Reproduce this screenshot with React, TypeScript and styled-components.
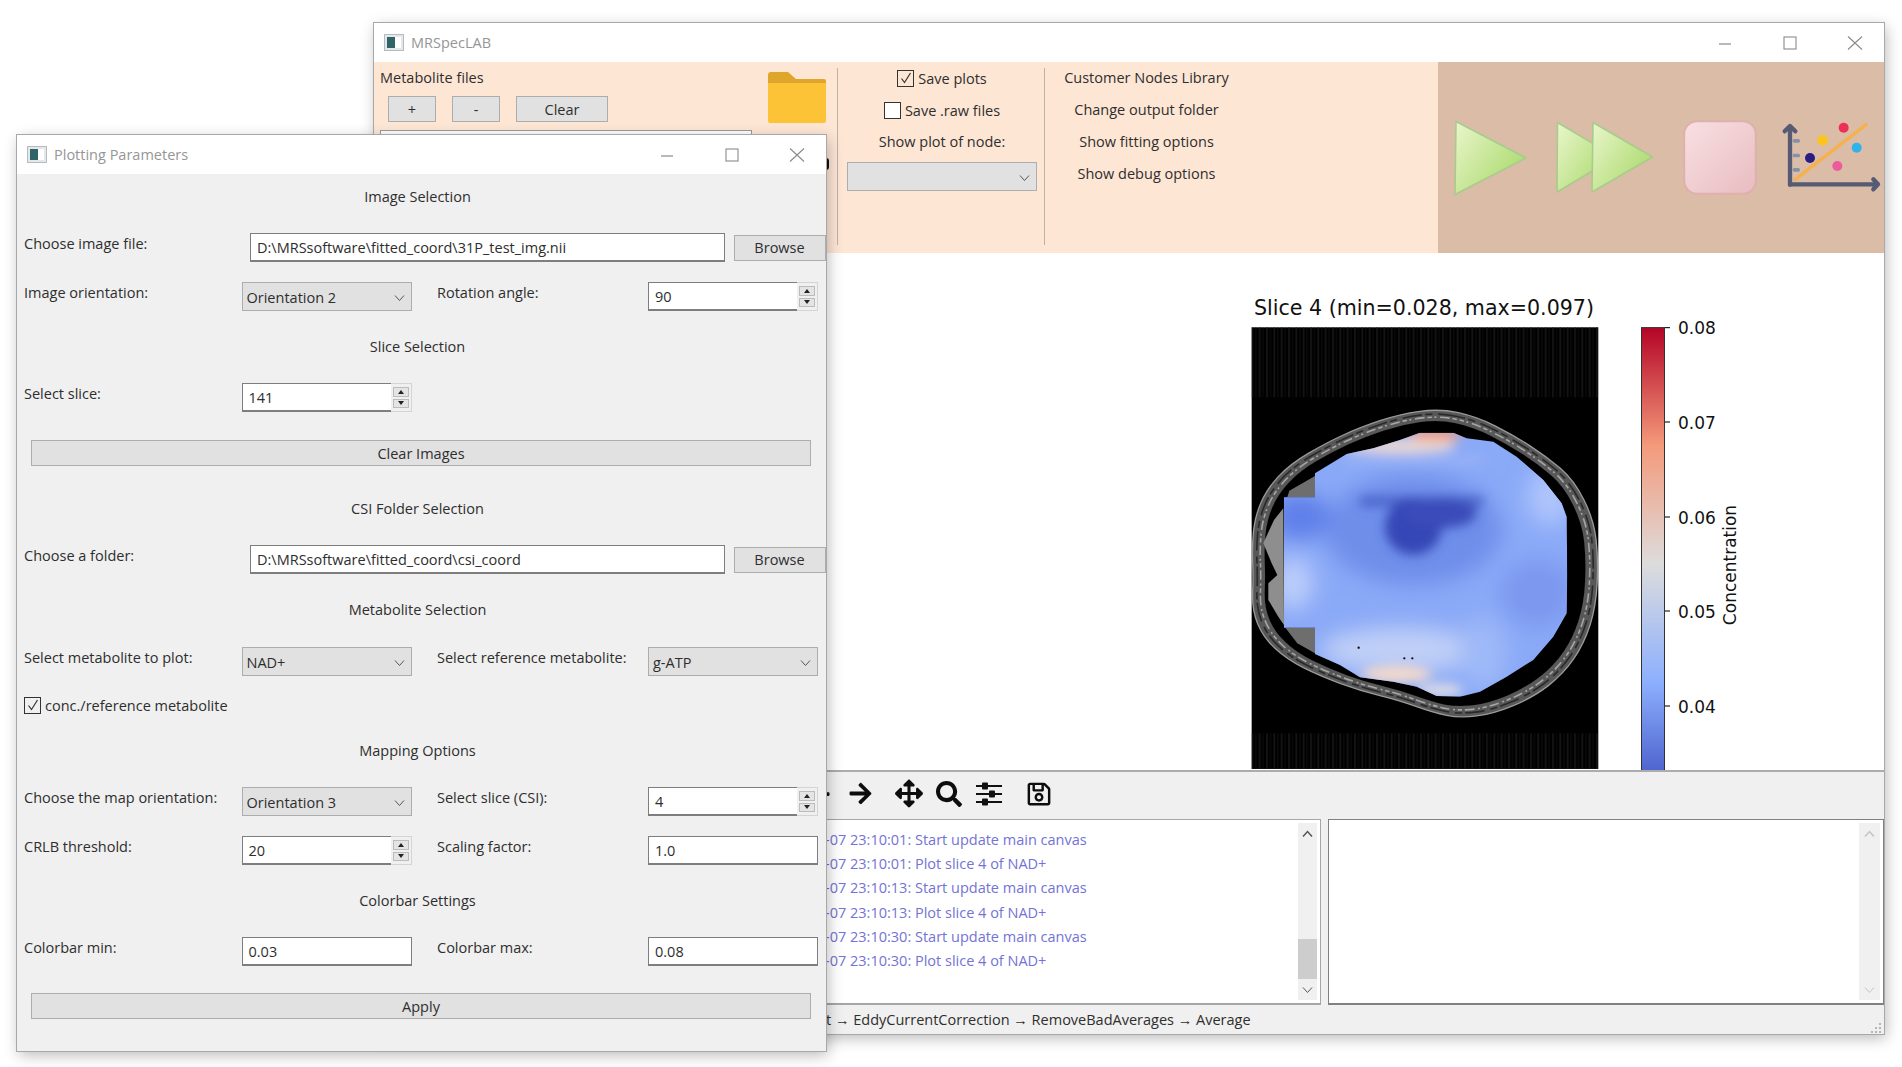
import React from "react";
import styled, { createGlobalStyle } from "styled-components";
import { FaArrowLeft, FaArrowRight, FaArrowsAlt, FaSearch, FaRegSave } from "react-icons/fa";

const GlobalStyle = createGlobalStyle`
  html, body { margin: 0; padding: 0; background: #fff; }
  body { width: 1902px; height: 1067px; overflow: hidden; font-family: "Open Sans", "Liberation Sans", sans-serif; }
  * { box-sizing: border-box; }
`;

const Desktop = styled.div`
  position: relative;
  width: 1902px;
  height: 1067px;
  overflow: hidden;
  background: #fff;
  font-size: 14.5px;
  color: #2e2e2e;
`;

const Window = styled.div<{ $x: number; $y: number; $w: number; $h: number }>`
  position: absolute;
  left: ${(p) => p.$x}px;
  top: ${(p) => p.$y}px;
  width: ${(p) => p.$w}px;
  height: ${(p) => p.$h}px;
  display: flex;
  flex-direction: column;
  background: #f0f0f0;
  box-shadow: 0 0 0 1px #a8a8a8, 2px 4px 14px rgba(0, 0, 0, 0.28);
`;

const TitleBar = styled.div`
  flex: none;
  height: 39px;
  display: flex;
  align-items: center;
  background: #fff;
  color: #969696;
  padding-left: 10px;
  gap: 7px;
`;

const TitleText = styled.span`
  flex: 1;
`;

const WinButton = styled.div`
  width: 58px;
  height: 39px;
  display: flex;
  align-items: center;
  justify-content: center;
`;

/* ---------- small drawings ---------- */

const AppIcon = () => (
  <svg width="20" height="17" viewBox="0 0 20 17">
    <rect x="0.5" y="0.5" width="19" height="16" fill="#e4e8ea" stroke="#b4bcc0" />
    <rect x="3" y="3" width="14" height="11" fill="#fff" />
    <rect x="3" y="3" width="8" height="11" fill="#2f6468" />
  </svg>
);

const MinIcon = () => (
  <svg width="14" height="14" viewBox="0 0 14 14">
    <line x1="1" y1="8" x2="13" y2="8" stroke="#8a8a8a" strokeWidth="1.2" />
  </svg>
);

const MaxIcon = () => (
  <svg width="14" height="14" viewBox="0 0 14 14">
    <rect x="1" y="1" width="12" height="12" fill="none" stroke="#8a8a8a" strokeWidth="1.1" />
  </svg>
);

const CloseIcon = () => (
  <svg width="16" height="14" viewBox="0 0 16 14">
    <path d="M1 0.5 L15 13.5 M15 0.5 L1 13.5" stroke="#8a8a8a" strokeWidth="1.1" />
  </svg>
);

const Chevron = ({ color = "#555" }: { color?: string }) => (
  <svg width="11" height="8" viewBox="0 0 11 8">
    <path d="M1 1.5 L5.5 6.5 L10 1.5" fill="none" stroke={color} strokeWidth="1" />
  </svg>
);

const ChevronUp = ({ color = "#555" }: { color?: string }) => (
  <svg width="11" height="8" viewBox="0 0 11 8">
    <path d="M1 6.5 L5.5 1.5 L10 6.5" fill="none" stroke={color} strokeWidth="1.5" />
  </svg>
);

const TickMark = () => (
  <svg width="12" height="12" viewBox="0 0 12 12">
    <path d="M1.5 6.5 L4.5 10.5 L10.5 1" fill="none" stroke="#333" strokeWidth="1.2" />
  </svg>
);

const FolderIcon = () => (
  <svg width="58" height="51" viewBox="0 0 58 51">
    <path d="M0 3 Q0 0 3 0 H20 L28 7 H56 Q58 7 58 9 V20 H0 Z" fill="#dfa62c" />
    <path d="M0 11 H58 V49 Q58 51 56 51 H2 Q0 51 0 49 Z" fill="#fcc336" />
  </svg>
);

const PlayIcon = () => (
  <svg width="74" height="76" viewBox="0 0 74 76">
    <defs>
      <linearGradient id="playFill" x1="0" y1="0" x2="1" y2="0.75">
        <stop offset="0" stopColor="#eaf6cc" />
        <stop offset="1" stopColor="#a9d96a" />
      </linearGradient>
    </defs>
    <path d="M2 1.5 L72 38 L1 74.5 Z" fill="url(#playFill)" stroke="#a9cb8c" strokeWidth="1.6" strokeLinejoin="round" />
  </svg>
);

const DoublePlayIcon = () => (
  <svg width="98" height="73" viewBox="0 0 98 73">
    <defs>
      <linearGradient id="playFill2" x1="0" y1="0" x2="1" y2="0.75">
        <stop offset="0" stopColor="#eaf6cc" />
        <stop offset="1" stopColor="#a9d96a" />
      </linearGradient>
    </defs>
    <path d="M1.5 1.5 L60 36 L1 71 Z" fill="url(#playFill2)" stroke="#a9cb8c" strokeWidth="1.6" strokeLinejoin="round" />
    <path d="M37 1.5 L96.5 36 L36 71 Z" fill="url(#playFill2)" stroke="#a9cb8c" strokeWidth="1.6" strokeLinejoin="round" />
  </svg>
);

const StopIcon = () => (
  <svg width="74" height="75" viewBox="0 0 74 75">
    <defs>
      <linearGradient id="stopFill" x1="0" y1="0" x2="1" y2="1">
        <stop offset="0" stopColor="#f8e0e3" />
        <stop offset="1" stopColor="#e8bcc0" />
      </linearGradient>
    </defs>
    <rect x="1.2" y="1.2" width="71.6" height="72.6" rx="13" fill="url(#stopFill)" stroke="#dfb0ae" strokeWidth="2" />
  </svg>
);

const ChartIcon = () => (
  <svg width="102" height="72" viewBox="1040 130 306 216">
    <line x1="1082" y1="305" x2="1302" y2="135" stroke="#f5b14e" strokeWidth="10" />
    <g fill="#8491a6">
      <rect x="1078" y="181" width="22" height="11" rx="5" />
      <rect x="1078" y="225" width="22" height="11" rx="5" />
      <rect x="1078" y="268" width="22" height="11" rx="5" />
    </g>
    <g fill="none" stroke="#565a72" strokeWidth="13" strokeLinecap="round" strokeLinejoin="round">
      <path d="M1070 318 V145 M1054 158 L1070 142 L1086 158" />
      <path d="M1070 317 H1330 M1320 302 L1334 317 L1320 332" />
    </g>
    <circle cx="1231" cy="147" r="15" fill="#ee3059" />
    <circle cx="1168" cy="185" r="16" fill="#fcc41c" />
    <circle cx="1270" cy="207" r="15" fill="#2fb3e8" />
    <circle cx="1130" cy="238" r="15" fill="#2a1c82" />
    <circle cx="1212" cy="262" r="15" fill="#ee5b9c" />
  </svg>
);

const SlidersIcon = () => (
  <svg width="26" height="24" viewBox="0 0 26 24">
    <g stroke="#111" strokeWidth="2">
      <line x1="0" y1="4" x2="26" y2="4" />
      <line x1="0" y1="12" x2="26" y2="12" />
      <line x1="0" y1="20" x2="26" y2="20" />
    </g>
    <g fill="#111">
      <rect x="6" y="0.5" width="6" height="7" rx="1" />
      <rect x="13" y="8.5" width="6" height="7" rx="1" />
      <rect x="6" y="16.5" width="6" height="7" rx="1" />
    </g>
  </svg>
);

const SizeGrip = () => (
  <svg width="12" height="12" viewBox="0 0 12 12" fill="#b4b4b4">
    <rect x="9" y="1" width="2" height="2" />
    <rect x="5" y="5" width="2" height="2" />
    <rect x="9" y="5" width="2" height="2" />
    <rect x="1" y="9" width="2" height="2" />
    <rect x="5" y="9" width="2" height="2" />
    <rect x="9" y="9" width="2" height="2" />
  </svg>
);

/* ---------- main window ---------- */

const Ribbon = styled.div`
  flex: none;
  height: 191px;
  display: flex;
`;

const PeachPanel = styled.div`
  width: 1064px;
  display: flex;
  padding-left: 6px;
  background: #fee6d5;
`;

const TanPanel = styled.div`
  flex: 1;
  display: flex;
  align-items: center;
  padding-left: 16px;
  background: #dabca7;
`;

const TanSlot = styled.div<{ $ml: number }>`
  margin-left: ${(p) => p.$ml}px;
  display: flex;
`;

const FileColumn = styled.div`
  width: 372px;
  padding-top: 4px;
  display: flex;
  flex-direction: column;
`;

const RibbonText = styled.div`
  height: 24px;
  line-height: 24px;
  white-space: nowrap;
`;

const FileButtons = styled.div`
  margin-top: 6px;
  padding-left: 8px;
  display: flex;
  gap: 16px;
`;

const FileList = styled.div`
  margin-top: 8px;
  height: 100px;
  background: #fff;
  border: 1px solid #9a9a9a;
`;

const FolderColumn = styled.div`
  width: 58px;
  margin-left: 16px;
  padding-top: 10px;
  display: flex;
  flex-direction: column;
  align-items: flex-end;
`;

const EdgeMark = styled.div`
  width: 6px;
  height: 12px;
  margin-top: 35px;
  margin-right: -3px;
  background: #111;
  border-radius: 3px;
`;

const RibbonRule = styled.div<{ $ml: number }>`
  flex: none;
  width: 1px;
  height: 177px;
  margin: 6px 0 0 ${(p) => p.$ml}px;
  background: #bdb2aa;
`;

const SaveColumn = styled.div`
  width: 190px;
  margin-left: 9px;
  padding-top: 4px;
  display: flex;
  flex-direction: column;
  align-items: center;
  gap: 8px;
`;

const NodesColumn = styled.div`
  width: 187px;
  margin-left: 8px;
  padding-top: 4px;
  display: flex;
  flex-direction: column;
  align-items: center;
  gap: 8px;
`;

const CheckRow = styled.div`
  height: 24px;
  display: flex;
  align-items: center;
  gap: 4px;
  white-space: nowrap;
`;

const CheckBox = styled.div<{ $on?: boolean }>`
  width: 17px;
  height: 17px;
  display: flex;
  align-items: center;
  justify-content: center;
  background: ${(p) => (p.$on ? "transparent" : "#fff")};
  border: 1px solid #333;
`;

const Canvas = styled.div`
  flex: none;
  height: 517px;
  background: #fff;
  overflow: hidden;
`;

const NavBar = styled.div`
  flex: none;
  height: 49px;
  display: flex;
  align-items: center;
  padding: 0 0 4px 432px;
  background: #f0f0f0;
  border-top: 2px solid #acacac;
  color: #0d0d0d;
`;

const NavSlot = styled.div<{ $ml: number; $w: number }>`
  width: ${(p) => p.$w}px;
  margin-left: ${(p) => p.$ml}px;
  display: flex;
  justify-content: center;
  svg { display: block; }
`;

const LogArea = styled.div`
  flex: none;
  height: 186px;
  display: flex;
  gap: 7px;
`;

const LogBox = styled.div<{ $dark?: boolean; $w?: number }>`
  width: ${(p) => (p.$w ? `${p.$w}px` : "auto")};
  flex: ${(p) => (p.$w ? "none" : 1)};
  display: flex;
  background: #fff;
  border: 1px solid ${(p) => (p.$dark ? "#808080" : "#a6a6a6")};
  border-bottom-width: 2px;
`;

const LogLines = styled.div`
  flex: 1;
  padding: 8px 0 0 450px;
  color: #7373d6;
`;

const LogLine = styled.div`
  height: 24.2px;
  line-height: 24.2px;
  white-space: nowrap;
`;

const ScrollTrack = styled.div<{ $w: number }>`
  position: relative;
  width: ${(p) => p.$w}px;
  margin: 3px 3px 3px 0;
  display: flex;
  flex-direction: column;
  align-items: center;
  justify-content: space-between;
  padding: 7px 0 6px;
  background: #f0f0f0;
`;

const ScrollThumb = styled.div`
  position: absolute;
  left: 0;
  right: 0;
  top: 116px;
  height: 40px;
  background: #cdcdcd;
`;

const StatusBar = styled.div`
  flex: 1;
  display: flex;
  align-items: center;
  justify-content: space-between;
  padding: 0 2px 0 452px;
  white-space: nowrap;
`;

const GripSlot = styled.div`
  align-self: flex-end;
  display: flex;
`;

/* ---------- plotting window ---------- */

const Form = styled.div`
  flex: 1;
  display: flex;
  flex-direction: column;
  padding-left: 7px;
`;

const SectionTitle = styled.div<{ $mt: number }>`
  height: 24px;
  line-height: 24px;
  margin-top: ${(p) => p.$mt}px;
  padding-right: 15px;
  text-align: center;
`;

const PathRow = styled.div<{ $mt: number }>`
  margin-top: ${(p) => p.$mt}px;
  display: grid;
  grid-template-columns: 217.5px 475px 92px;
  column-gap: 8.5px;
  align-items: center;
`;

const PairRow = styled.div<{ $mt: number }>`
  margin-top: ${(p) => p.$mt}px;
  display: grid;
  grid-template-columns: 217.5px 170px 236.5px 170px;
  align-items: center;
`;

const Label = styled.div`
  padding-bottom: 8px;
  white-space: nowrap;
`;

const SecondLabel = styled(Label)`
  padding-left: 25.5px;
`;

const Field = styled.div`
  height: 29px;
  line-height: 27px;
  padding-left: 6px;
  background: #fff;
  border: 1px solid #7e7e7e;
  border-bottom-width: 2px;
  white-space: nowrap;
`;

const SpinWrap = styled.div`
  display: flex;
  height: 29px;
`;

const SpinField = styled(Field)`
  flex: 1;
  border-right: 0;
`;

const SpinArrows = styled.div`
  width: 21px;
  padding: 3px 2px;
  display: flex;
  flex-direction: column;
  gap: 2px;
  background: #f0f0f0;
  border: 1px solid #d4d4d4;
  border-left: 0;
`;

const SpinArrow = styled.div<{ $down?: boolean }>`
  flex: 1;
  position: relative;
  background: #e4e4e4;
  border: 1px solid #bcbcbc;
  &::after {
    content: "";
    position: absolute;
    left: 50%;
    top: 50%;
    margin: -2px 0 0 -3px;
    border-left: 3px solid transparent;
    border-right: 3px solid transparent;
    ${(p) => (p.$down ? "border-top: 4px solid #222;" : "border-bottom: 4px solid #222;")}
  }
`;

const Combo = styled.div`
  height: 29px;
  display: flex;
  align-items: center;
  justify-content: space-between;
  padding: 2px 6px 0 4px;
  background: #e1e1e1;
  border: 1px solid #adadad;
  white-space: nowrap;
`;

const Button = styled.div<{ $w?: number }>`
  width: ${(p) => (p.$w ? `${p.$w}px` : "auto")};
  height: 26px;
  display: flex;
  align-items: center;
  justify-content: center;
  background: #e1e1e1;
  border: 1px solid #adadad;
`;

const WideButton = styled(Button)<{ $mt: number }>`
  margin: ${(p) => p.$mt}px 15px 0 7px;
`;

const CheckLine = styled(CheckRow)<{ $mt: number }>`
  margin-top: ${(p) => p.$mt}px;
`;

const Spin = ({ value }: { value: string }) => (
  <SpinWrap>
    <SpinField>{value}</SpinField>
    <SpinArrows>
      <SpinArrow />
      <SpinArrow $down />
    </SpinArrows>
  </SpinWrap>
);

const Select = ({ value }: { value: string }) => (
  <Combo>
    {value}
    <Chevron />
  </Combo>
);

/* ---------- the plot ---------- */

const smooth = (pts: number[][]) => {
  const mid = (a: number[], b: number[]) => [(a[0] + b[0]) / 2, (a[1] + b[1]) / 2];
  const start = mid(pts[pts.length - 1], pts[0]);
  let d = `M${start[0]} ${start[1]}`;
  pts.forEach((p, i) => {
    const m = mid(p, pts[(i + 1) % pts.length]);
    d += ` Q${p[0]} ${p[1]} ${m[0]} ${m[1]}`;
  });
  return d + " Z";
};

const headPoints = [
  [720, 326], [600, 342], [480, 382], [380, 428], [270, 492], [200, 568], [165, 650], [156, 740], [160, 830],
  [156, 930], [190, 1012], [260, 1078], [360, 1128], [480, 1172], [600, 1202], [700, 1238], [780, 1254], [880, 1242],
  [1000, 1192], [1090, 1122], [1152, 1032], [1188, 920], [1195, 780], [1182, 660], [1122, 540], [1040, 470],
  [940, 405], [830, 350],
];
const headPath = smooth(headPoints);

const maskPoints =
  "660,398 760,398 800,415 880,425 950,470 1030,540 1085,610 1100,650 1102,820 1100,940 1060,1010 1000,1080 920,1130 840,1175 780,1190 710,1188 650,1160 580,1145 480,1132 420,1095 345,1062 345,983 252,983 252,592 345,592 345,520 440,462 520,445 600,420";

const barStops = [
  ["0", "#b40426"],
  ["0.25", "#f49a7b"],
  ["0.5", "#dddcdc"],
  ["0.75", "#8db0fe"],
  ["1", "#3b4cc0"],
];

const ticks = [
  { v: "0.08", y: 327.6 },
  { v: "0.07", y: 422 },
  { v: "0.06", y: 517 },
  { v: "0.05", y: 611 },
  { v: "0.04", y: 706 },
];

const Plot = () => (
  <svg width="1510" height="517" viewBox="374 253 1510 517" style={{ display: "block" }}>
    <defs>
      <clipPath id="brainMask">
        <polygon points={maskPoints} />
      </clipPath>
      <filter id="heatBlur" x="-30%" y="-30%" width="160%" height="160%">
        <feGaussianBlur stdDeviation="32" />
      </filter>
      <filter id="softBlur" x="-30%" y="-30%" width="160%" height="160%">
        <feGaussianBlur stdDeviation="16" />
      </filter>
      <filter id="edgeBlur">
        <feGaussianBlur stdDeviation="1.2" />
      </filter>
      <pattern id="stripes" width="22" height="10" patternUnits="userSpaceOnUse">
        <rect width="6" height="10" fill="#1b1b1b" />
        <rect x="12" width="3" height="10" fill="#141414" />
      </pattern>
      <linearGradient id="coolwarm" x1="0" y1="0" x2="0" y2="1">
        {barStops.map(([o, c]) => (
          <stop key={o} offset={o} stopColor={c} />
        ))}
      </linearGradient>
    </defs>

    <text x="1424" y="315" textAnchor="middle" fontFamily="DejaVu Sans" fontSize="20.6" fill="#111">
      Slice 4 (min=0.028, max=0.097)
    </text>

    <g transform="translate(1200 300) scale(0.3333)">
      <rect x="155" y="82" width="1040" height="1325" fill="#000" />
      <rect x="155" y="82" width="1040" height="210" fill="url(#stripes)" opacity="0.7" />
      <rect x="155" y="1300" width="1040" height="107" fill="url(#stripes)" opacity="0.7" />

      <g filter="url(#edgeBlur)">
        <path d={headPath} fill="#585858" />
        <path d={headPath} fill="none" stroke="#9a9a9a" strokeWidth="4" />
        <g transform="translate(675 790) scale(0.975) translate(-675 -790)">
          <path d={headPath} fill="none" stroke="#2a2a2a" strokeWidth="5" strokeDasharray="60 18 22 10" />
        </g>
        <g transform="translate(675 790) scale(0.955) translate(-675 -790)">
          <path d={headPath} fill="none" stroke="#a6a6a6" strokeWidth="5" strokeDasharray="14 9 30 12 6 8" />
        </g>
        <g transform="translate(675 790) scale(0.93) translate(-675 -790)">
          <path d={headPath} fill="#060606" />
        </g>
      </g>

      <polygon points="250,625 222,660 190,730 215,790 232,825 205,850 205,900 235,950 252,975" fill="#8e8e8e" />
      <polygon points="262,591 345,591 345,528 268,572" fill="#6e6e6e" />
      <polygon points="256,983 345,983 345,1060 292,1030" fill="#6e6e6e" />

      <g clipPath="url(#brainMask)">
        <rect x="240" y="380" width="880" height="830" fill="#8aa9f7" />
        <g filter="url(#heatBlur)">
          <ellipse cx="640" cy="690" rx="265" ry="165" fill="#6e8eea" />
          <ellipse cx="300" cy="650" rx="90" ry="70" fill="#5f7fe9" />
          <ellipse cx="1050" cy="590" rx="70" ry="90" fill="#adc4fc" />
          <ellipse cx="1010" cy="880" rx="110" ry="100" fill="#7c98ef" />
          <ellipse cx="280" cy="850" rx="60" ry="80" fill="#bccdfb" />
          <ellipse cx="600" cy="1050" rx="240" ry="70" fill="#bfcff7" />
          <ellipse cx="850" cy="1060" rx="70" ry="110" fill="#9fb9f8" />
        </g>
        <g filter="url(#softBlur)">
          <rect x="480" y="590" width="370" height="28" fill="#4a62c9" />
          <ellipse cx="640" cy="680" rx="85" ry="85" fill="#3446b6" />
          <ellipse cx="720" cy="640" rx="110" ry="45" fill="#3a4cb9" />
          <rect x="430" y="470" width="420" height="20" fill="#9db4f5" />
          <ellipse cx="600" cy="438" rx="170" ry="24" fill="#e6d6d4" />
          <ellipse cx="708" cy="405" rx="80" ry="18" fill="#f29f80" />
          <ellipse cx="590" cy="1122" rx="105" ry="26" fill="#f3d9cc" />
          <ellipse cx="720" cy="1170" rx="70" ry="20" fill="#dcdce6" />
        </g>
      </g>

      <circle cx="476" cy="1043" r="3.5" fill="#111" />
      <circle cx="613" cy="1075" r="3.5" fill="#111" />
      <circle cx="637" cy="1075" r="3.5" fill="#111" />
    </g>

    <rect x="1641.5" y="327.6" width="23" height="472" fill="url(#coolwarm)" stroke="#333" strokeWidth="1" />
    {ticks.map((t) => (
      <g key={t.v}>
        <line x1="1665" y1={t.y} x2="1670" y2={t.y} stroke="#222" strokeWidth="1.2" />
        <text x="1678" y={t.y + 6.5} fontFamily="DejaVu Sans" fontSize="17" fill="#111">
          {t.v}
        </text>
      </g>
    ))}
    <text
      transform="translate(1736 565) rotate(-90)"
      textAnchor="middle"
      fontFamily="DejaVu Sans"
      fontSize="17"
      fill="#111"
    >
      Concentration
    </text>
  </svg>
);

const logEntries = [
  "-07 23:10:01: Start update main canvas",
  "-07 23:10:01: Plot slice 4 of NAD+",
  "-07 23:10:13: Start update main canvas",
  "-07 23:10:13: Plot slice 4 of NAD+",
  "-07 23:10:30: Start update main canvas",
  "-07 23:10:30: Plot slice 4 of NAD+",
];

const WindowControls = () => (
  <>
    <WinButton>
      <MinIcon />
    </WinButton>
    <WinButton>
      <MaxIcon />
    </WinButton>
    <WinButton>
      <CloseIcon />
    </WinButton>
  </>
);

const App = () => (
  <Desktop>
    <GlobalStyle />

    <Window $x={374} $y={23} $w={1510} $h={1011}>
      <TitleBar>
        <AppIcon />
        <TitleText>MRSpecLAB</TitleText>
        <WindowControls />
      </TitleBar>

      <Ribbon>
        <PeachPanel>
          <FileColumn>
            <RibbonText>Metabolite files</RibbonText>
            <FileButtons>
              <Button $w={48}>+</Button>
              <Button $w={48}>-</Button>
              <Button $w={92}>Clear</Button>
            </FileButtons>
            <FileList />
          </FileColumn>
          <FolderColumn>
            <FolderIcon />
            <EdgeMark />
          </FolderColumn>
          <RibbonRule $ml={11} />
          <SaveColumn>
            <CheckRow>
              <CheckBox $on>
                <TickMark />
              </CheckBox>
              Save plots
            </CheckRow>
            <CheckRow>
              <CheckBox />
              Save .raw files
            </CheckRow>
            <RibbonText>Show plot of node:</RibbonText>
            <Combo style={{ width: 190 }}>
              <span />
              <Chevron />
            </Combo>
          </SaveColumn>
          <RibbonRule $ml={7} />
          <NodesColumn>
            <RibbonText>Customer Nodes Library</RibbonText>
            <RibbonText>Change output folder</RibbonText>
            <RibbonText>Show fitting options</RibbonText>
            <RibbonText>Show debug options</RibbonText>
          </NodesColumn>
        </PeachPanel>
        <TanPanel>
          <PlayIcon />
          <TanSlot $ml={28}>
            <DoublePlayIcon />
          </TanSlot>
          <TanSlot $ml={29}>
            <StopIcon />
          </TanSlot>
          <TanSlot $ml={23}>
            <ChartIcon />
          </TanSlot>
        </TanPanel>
      </Ribbon>

      <Canvas>
        <Plot />
      </Canvas>

      <NavBar>
        <NavSlot $ml={0} $w={26}>
          <FaArrowLeft size={24} />
        </NavSlot>
        <NavSlot $ml={15} $w={26}>
          <FaArrowRight size={25} />
        </NavSlot>
        <NavSlot $ml={22} $w={28}>
          <FaArrowsAlt size={29} />
        </NavSlot>
        <NavSlot $ml={12} $w={27}>
          <FaSearch size={26} />
        </NavSlot>
        <NavSlot $ml={14} $w={26}>
          <SlidersIcon />
        </NavSlot>
        <NavSlot $ml={24} $w={26}>
          <FaRegSave size={26} />
        </NavSlot>
      </NavBar>

      <LogArea>
        <LogBox $w={947}>
          <LogLines>
            {logEntries.map((line, i) => (
              <LogLine key={i}>{line}</LogLine>
            ))}
          </LogLines>
          <ScrollTrack $w={19}>
            <ChevronUp />
            <ScrollThumb />
            <Chevron color="#555" />
          </ScrollTrack>
        </LogBox>
        <LogBox $dark>
          <LogLines />
          <ScrollTrack $w={21}>
            <ChevronUp color="#c4c4c4" />
            <Chevron color="#c4c4c4" />
          </ScrollTrack>
        </LogBox>
      </LogArea>

      <StatusBar>
        t → EddyCurrentCorrection → RemoveBadAverages → Average
        <GripSlot>
          <SizeGrip />
        </GripSlot>
      </StatusBar>
    </Window>

    <Window $x={17} $y={135} $w={809} $h={916}>
      <TitleBar>
        <AppIcon />
        <TitleText>Plotting Parameters</TitleText>
        <WindowControls />
      </TitleBar>
      <Form>
        <SectionTitle $mt={11}>Image Selection</SectionTitle>
        <PathRow $mt={24}>
          <Label>Choose image file:</Label>
          <Field>D:\MRSsoftware\fitted_coord\31P_test_img.nii</Field>
          <Button>Browse</Button>
        </PathRow>
        <PairRow $mt={20}>
          <Label>Image orientation:</Label>
          <Select value="Orientation 2" />
          <SecondLabel>Rotation angle:</SecondLabel>
          <Spin value="90" />
        </PairRow>
        <SectionTitle $mt={24}>Slice Selection</SectionTitle>
        <PairRow $mt={24}>
          <Label>Select slice:</Label>
          <Spin value="141" />
        </PairRow>
        <WideButton $mt={28}>Clear Images</WideButton>
        <SectionTitle $mt={31}>CSI Folder Selection</SectionTitle>
        <PathRow $mt={24}>
          <Label>Choose a folder:</Label>
          <Field>D:\MRSsoftware\fitted_coord\csi_coord</Field>
          <Button>Browse</Button>
        </PathRow>
        <SectionTitle $mt={24}>Metabolite Selection</SectionTitle>
        <PairRow $mt={25}>
          <Label>Select metabolite to plot:</Label>
          <Select value="NAD+" />
          <SecondLabel>Select reference metabolite:</SecondLabel>
          <Select value="g-ATP" />
        </PairRow>
        <CheckLine $mt={17}>
          <CheckBox $on>
            <TickMark />
          </CheckBox>
          conc./reference metabolite
        </CheckLine>
        <SectionTitle $mt={22}>Mapping Options</SectionTitle>
        <PairRow $mt={24}>
          <Label>Choose the map orientation:</Label>
          <Select value="Orientation 3" />
          <SecondLabel>Select slice (CSI):</SecondLabel>
          <Spin value="4" />
        </PairRow>
        <PairRow $mt={20}>
          <Label>CRLB threshold:</Label>
          <Spin value="20" />
          <SecondLabel>Scaling factor:</SecondLabel>
          <Field>1.0</Field>
        </PairRow>
        <SectionTitle $mt={24}>Colorbar Settings</SectionTitle>
        <PairRow $mt={24}>
          <Label>Colorbar min:</Label>
          <Field>0.03</Field>
          <SecondLabel>Colorbar max:</SecondLabel>
          <Field>0.08</Field>
        </PairRow>
        <WideButton $mt={27}>Apply</WideButton>
      </Form>
    </Window>
  </Desktop>
);

export default App;
